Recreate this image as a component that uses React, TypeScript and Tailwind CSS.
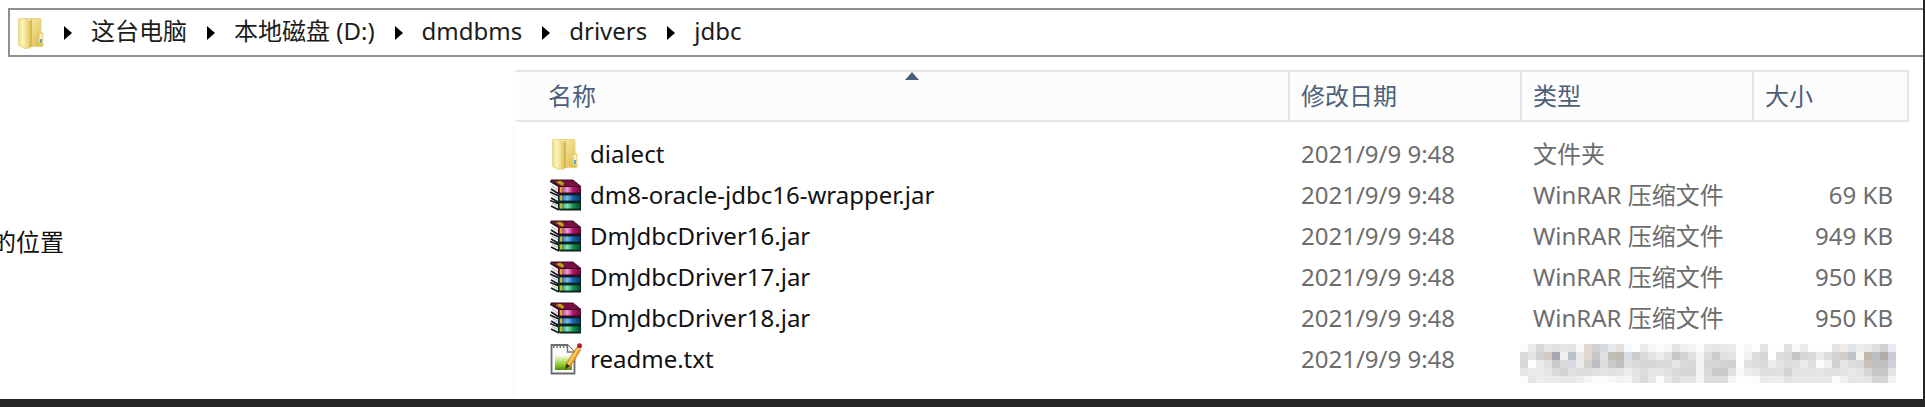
import { Fragment } from 'react';

interface FileItem {
  name: string;
  kind: 'folder' | 'jar' | 'txt';
  date: string;
  type?: string;
  size?: string;
}

const PATH = ['这台电脑', '本地磁盘 (D:)', 'dmdbms', 'drivers', 'jdbc'];

const FILES: FileItem[] = [
  { name: 'dialect', kind: 'folder', date: '2021/9/9 9:48', type: '文件夹', size: '' },
  {
    name: 'dm8-oracle-jdbc16-wrapper.jar',
    kind: 'jar',
    date: '2021/9/9 9:48',
    type: 'WinRAR 压缩文件',
    size: '69 KB',
  },
  { name: 'DmJdbcDriver16.jar', kind: 'jar', date: '2021/9/9 9:48', type: 'WinRAR 压缩文件', size: '949 KB' },
  { name: 'DmJdbcDriver17.jar', kind: 'jar', date: '2021/9/9 9:48', type: 'WinRAR 压缩文件', size: '950 KB' },
  { name: 'DmJdbcDriver18.jar', kind: 'jar', date: '2021/9/9 9:48', type: 'WinRAR 压缩文件', size: '950 KB' },
  { name: 'readme.txt', kind: 'txt', date: '2021/9/9 9:48' },
];

// two digits are a grey level, six are a full colour
const MOSAIC = [
  'fc eb d5d8d5 e6 e0 e6 e3 fa dfd8d4 d0 d9dbe1 e6eaec e4dfdb f5fafe fd eb f6 fc f6 e4 ef f4 fb e9 e6 e9 eb fe f6 fe e4 fe fe e2 f9 eb fe fe fe e4 f0ece9 e0e5ea ec e9 df d0 e8ecf0',
  'd9 e3 d1 d0cbc5 a5a9af ef bdc1cb e9 dfd8d4 c7 e1 c1bdb7 bfbbb4 d8dde6 cc d9 e3 ec e2 c8 d3 e2 f4 dc cd e2 e4 fe f2 dc d5 ff dc db c4 d6 db eb dc d3 cfcecc c0c4c8 f3 c2b9ac bcbec3 b0aca8 c8ccd1',
  'd7 fe ea e0 ca d6dadb d8dbe0 eb d3d1ce bcbebf dc cac9c6 c0 df d9 d6 d5 d9 d9 e5 da d8 f4 d5 d5 d4 d0 fe e1 dd d9 ed e4 dc df eb df fb f0 d0 e6 dd da c8c3b8 bf bf cfd0d5',
  'e5 eb eb e7 da d2 e0 dc dd e1 e4 e2 e4 ec e3 dd e6 e7 e0 d9 d5 d5 f4 d9 c9 c9 e0 f9 ed e8 df de e2 d2 e4 e4 e4 e6 e2 e0 e4 e8 e4 d5 c8 c6 e3',
  'fb e6 ed eb eb e7 e9 ec f5 fa fc f8 f3 f4 e6 da e8 fb e9 de e4 e4 f4 dd dc dd f4 fe fe fb eb ec ed e2 e9 e8 e8 e8 e9 fb f1 e6 e8 e4 d4 d6 f3',
].map((row) => row.split(' ').map((c) => (c.length === 2 ? `#${c}${c}${c}` : `#${c}`)));

const Mosaic = () => (
  <svg width="376" height="39" shapeRendering="crispEdges" aria-hidden="true">
    {MOSAIC.map((row, y) =>
      row.map((fill, x) => <rect key={`${x}-${y}`} x={x * 8} y={y * 8} width="8" height="8" fill={fill} />),
    )}
  </svg>
);

const FolderIcon = () => (
  <svg className="shrink-0" width="28" height="32" viewBox="0 0 28 32" aria-hidden="true">
    <defs>
      <linearGradient id="folderBack" x1="0" y1="0" x2="1" y2="1">
        <stop offset="0" stopColor="#faf0b4" />
        <stop offset="1" stopColor="#dcb947" />
      </linearGradient>
      <linearGradient id="folderFront" x1="0" y1="0" x2="1" y2="0">
        <stop offset="0" stopColor="#f0dd8a" />
        <stop offset="0.4" stopColor="#fbf3bd" />
        <stop offset="1" stopColor="#e6cc68" />
      </linearGradient>
    </defs>
    <path d="M9 1.500h15q1 0 1 1v12l2 2v12q0 1-1 1H10z" fill="url(#folderBack)" stroke="#e9d384" />
    <path d="M2.500 2.500q0-1 1-1H9l4.500 2.500v27L9 31.500l-6.500-3z" fill="url(#folderFront)" stroke="#ead68a" />
    <path d="M13.500 4l2.500-1.500V29l-2.500 2.500z" fill="#d8b650" />
    <path d="M23.500 18.500q0-2 1.500-2t1.500 2v8h-3z" fill="#f6efc9" />
    <path d="M24 22h2v4h-2z" fill="#5ba9c9" />
  </svg>
);

const JarIcon = () => (
  <svg width="32" height="32" viewBox="0 0 32 32" aria-hidden="true">
    <defs>
      <linearGradient id="bookRed" x1="0" y1="0" x2="1" y2="0">
        <stop offset="0" stopColor="#8c0d4c" />
        <stop offset="0.4" stopColor="#e9a0cc" />
        <stop offset="0.65" stopColor="#b3136b" />
        <stop offset="1" stopColor="#6b0638" />
      </linearGradient>
      <linearGradient id="bookBlue" x1="0" y1="0" x2="1" y2="0">
        <stop offset="0" stopColor="#0e4676" />
        <stop offset="0.4" stopColor="#7db9e6" />
        <stop offset="0.65" stopColor="#1766ab" />
        <stop offset="1" stopColor="#0a365f" />
      </linearGradient>
      <linearGradient id="bookGreen" x1="0" y1="0" x2="1" y2="0">
        <stop offset="0" stopColor="#08643a" />
        <stop offset="0.4" stopColor="#90e3b8" />
        <stop offset="0.65" stopColor="#159458" />
        <stop offset="1" stopColor="#054728" />
      </linearGradient>
    </defs>
    {/* covers seen from behind the pages */}
    <path d="M9 13h22v18.500H10l-2-2z" fill="#141414" />
    <path d="M1 5l8 4.500v5.500L2 10zM1 15l8 3v5l-7-4zM1 23l8 2.500v5.500l-7-4z" fill="#f1f1f1" />
    <path d="M0 2l9 5.500M1 10l8 5M0 13l9 4M1 19l8 4.500M0 21.500l9 3.500M1 27l8 4" stroke="#171717" strokeWidth="1.600" />
    <path d="M2 7l6 4M2 16l6 3.500M2 24.500l6 3" stroke="#b5b5b5" />
    <path d="M1 1h22l8 6.500H9z" fill="#771040" stroke="#3f0821" />
    <path d="M6 3l4-1.500 4 2.500-1 3-3-1.500z" fill="#b9a60d" />
    <path d="M8.500 7.500H30q1.500 3.500 0 6.500H8.500z" fill="url(#bookRed)" stroke="#430524" />
    <path d="M8.500 16H30q1.500 3 0 6H8.500z" fill="url(#bookBlue)" stroke="#082a49" />
    <path d="M8.500 24H30q1.500 3 0 6H8.500z" fill="url(#bookGreen)" stroke="#033b21" />
    <path d="M11 8v5.500M11 16.500v5M11 24.500v5" stroke="#d5b514" strokeWidth="2" />
  </svg>
);

const TextIcon = () => (
  <svg width="32" height="32" viewBox="0 0 32 32" aria-hidden="true">
    <defs>
      <linearGradient id="noteGreen" x1="0" y1="0" x2="0" y2="1">
        <stop offset="0" stopColor="#f0f8d6" />
        <stop offset="0.6" stopColor="#93d02c" />
        <stop offset="1" stopColor="#4b8e12" />
      </linearGradient>
    </defs>
    <path d="M1.500 2h16l7 7v21.500h-23z" fill="#fbfbfb" stroke="#6b6b6b" strokeWidth="1.800" />
    <path d="M17.500 2v7h7" fill="#fff" stroke="#777" strokeWidth="1.400" />
    <path d="M3 3.500h14" stroke="#777" strokeWidth="3" strokeDasharray="1.500 1.800" />
    <path d="M5 13h17v14H5z" fill="url(#noteGreen)" />
    <path d="M15 26.500l1.500-6L27 4l4 2.500L20.500 23z" fill="#f2a92c" stroke="#b97513" strokeWidth="0.800" />
    <path d="M18 21.500L28.500 5" stroke="#ffdb7d" strokeWidth="1.200" />
    <path d="M15 26.500l1.500-6 3.500 2.500z" fill="#3d2a14" />
    <path d="M27 4l4 2.500" stroke="#d5d5d5" strokeWidth="1.500" />
    <circle cx="29.500" cy="2.800" r="2.500" fill="#b51f2b" />
  </svg>
);

const FileIcon = ({ kind }: { kind: FileItem['kind'] }) => {
  if (kind === 'folder') return <FolderIcon />;
  if (kind === 'jar') return <JarIcon />;
  return <TextIcon />;
};

const AddressBar = () => (
  <nav
    aria-label="地址"
    className="ml-2 mt-2 flex h-[49px] items-center border-2 border-r-0 border-[#8f8f8f] bg-white pl-[6px] text-2xl text-[#1c1c1c]"
  >
    <FolderIcon />
    {PATH.map((part) => (
      <Fragment key={part}>
        <svg className="mx-[19px]" width="9" height="14" viewBox="0 0 9 14" aria-hidden="true">
          <path d="M1 0l8 7-8 7z" fill="#000" />
        </svg>
        <a href="#" className="whitespace-nowrap pb-1">
          {part}
        </a>
      </Fragment>
    ))}
  </nav>
);

const FileTable = () => (
  <table className="w-full table-fixed border-separate border-spacing-0 whitespace-nowrap text-left text-2xl">
    <colgroup>
      <col />
      <col className="w-[232px]" />
      <col className="w-[232px]" />
      <col className="w-[155px]" />
    </colgroup>
    <thead className="text-[#4c607a]">
      <tr className="h-[52px] bg-[#fcfcfc]">
        <th className="border-y-2 border-r-2 border-[#e5e5e5] p-0 pl-5 font-normal">
          <button type="button" className="relative flex h-12 w-full items-center pl-3">
            名称
            <svg className="absolute left-1/2 top-0 -translate-x-1/2" width="14" height="8" viewBox="0 0 14 8" aria-hidden="true">
              <path d="M7 0l7 8H0z" fill="#4c607a" />
            </svg>
          </button>
        </th>
        <th className="border-y-2 border-r-2 border-[#e5e5e5] p-0 pl-[11px] font-normal">
          <button type="button">修改日期</button>
        </th>
        <th className="border-y-2 border-r-2 border-[#e5e5e5] p-0 pl-[11px] font-normal">
          <button type="button">类型</button>
        </th>
        <th className="border-y-2 border-r-2 border-[#e5e5e5] p-0 pl-[11px] font-normal">
          <button type="button">大小</button>
        </th>
      </tr>
    </thead>
    <tbody className="text-[#6d6d6d]">
      <tr className="h-[11px]" aria-hidden="true">
        <td colSpan={4} className="p-0" />
      </tr>
      {FILES.map((file) => (
        <tr key={file.name} className="h-[41px]">
          <td className="p-0 pl-[34px]">
            <div className="flex items-center gap-2 text-[#111]">
              <span className="w-8">
                <FileIcon kind={file.kind} />
              </span>
              {file.name}
            </div>
          </td>
          <td className="p-0 pl-[11px]">{file.date}</td>
          {file.type ? (
            <>
              <td className="p-0 pl-[11px]">{file.type}</td>
              <td className="p-0 pr-4 text-right">{file.size}</td>
            </>
          ) : (
            <td colSpan={2} className="p-0 align-bottom">
              <div className="relative -left-0.5 top-1 flex">
                <Mosaic />
              </div>
            </td>
          )}
        </tr>
      ))}
    </tbody>
  </table>
);

const App = () => {
  return (
    <div className="flex min-h-screen flex-col overflow-hidden border-b-8 border-r-2 border-[#252628] bg-white font-['Noto_Sans','Noto_Sans_CJK_SC',sans-serif]">
      <AddressBar />
      <div className="flex flex-1 pt-[13px]">
        <aside className="w-[514px] shrink-0 overflow-hidden border-r border-[#f7f7f7] pt-[156px]">
          <p className="-ml-2 text-2xl text-[#111]">的位置</p>
        </aside>
        <main className="min-w-0 flex-1 pl-[2px] pr-[14px]">
          <FileTable />
        </main>
      </div>
    </div>
  );
};

export default App;
